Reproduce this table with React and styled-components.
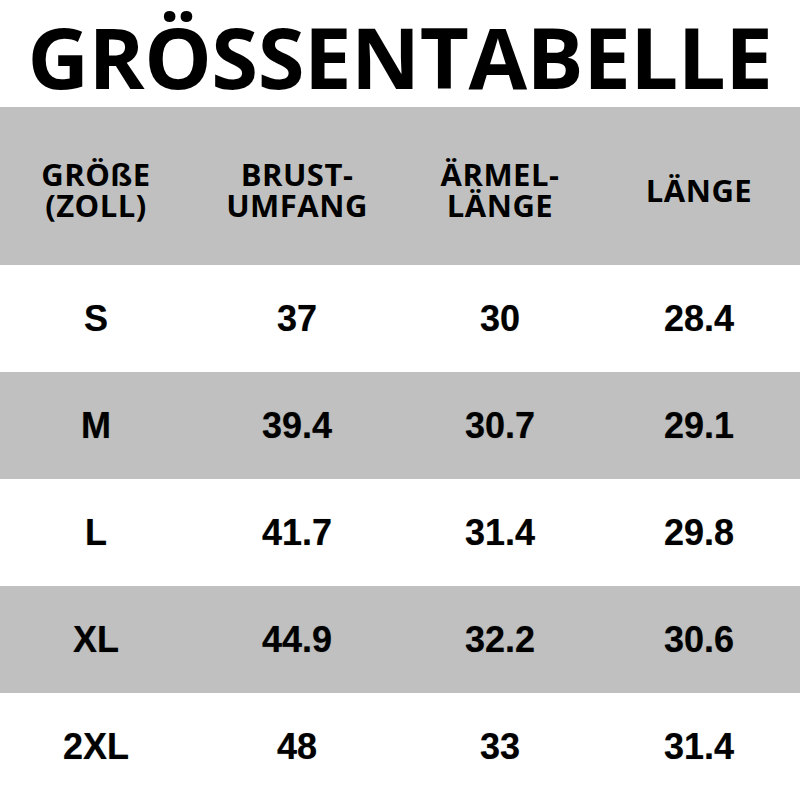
import React from 'react'
import styled, { createGlobalStyle } from 'styled-components'

const GlobalStyle = createGlobalStyle`
  html, body {
    margin: 0;
    padding: 0;
    background: #fff;
  }
  body {
    font-family: "Liberation Sans", Arial, sans-serif;
  }
`

const rows = [
  ['S', '37', '30', '28.4'],
  ['M', '39.4', '30.7', '29.1'],
  ['L', '41.7', '31.4', '29.8'],
  ['XL', '44.9', '32.2', '30.6'],
  ['2XL', '48', '33', '31.4'],
]

const headers = [
  ['GRÖßE', '(ZOLL)'],
  ['BRUST-', 'UMFANG'],
  ['ÄRMEL-', 'LÄNGE'],
  ['LÄNGE'],
]

const Page = styled.div`
  width: 800px;
  height: 800px;
  overflow: hidden;
  display: flex;
  flex-direction: column;
`

const Title = styled.h1`
  margin: 0;
  height: 107px;
  display: flex;
  align-items: center;
  justify-content: center;
  font-family: "Open Sans", sans-serif;
  font-weight: 700;
  font-size: 85px;
  line-height: 1;
  letter-spacing: -0.5px;
  color: #000;
  white-space: nowrap;
  padding-top: 6px;
  box-sizing: border-box;
`

const Row = styled.div`
  display: grid;
  grid-template-columns: 192px 210px 196px 202px;
  align-items: center;
  height: ${p => p.$height}px;
  background: ${p => (p.$shaded ? '#c0c0c0' : '#fff')};
`

const HeadCell = styled.div`
  text-align: center;
  font-family: "Open Sans", sans-serif;
  font-weight: 700;
  font-size: 31px;
  line-height: 31px;
  letter-spacing: 0.5px;
  color: #000;
  padding-top: 8px;
`

const Cell = styled.div`
  text-align: center;
  font-family: "Liberation Sans", Arial, sans-serif;
  font-weight: 700;
  font-size: 36px;
  color: #000;
  text-shadow: 0 0 1px rgba(0, 0, 0, 0.4);
`

export default function App() {
  return (
    <>
      <GlobalStyle />
      <Page>
        <Title>GRÖSSENTABELLE</Title>
        <Row $height={158} $shaded>
          {headers.map((lines, i) => (
            <HeadCell key={i}>
              {lines.map(l => <div key={l}>{l}</div>)}
            </HeadCell>
          ))}
        </Row>
        {rows.map((r, i) => (
          <Row key={r[0]} $height={107} $shaded={i % 2 === 1}>
            {r.map((v, j) => <Cell key={j}>{v}</Cell>)}
          </Row>
        ))}
      </Page>
    </>
  )
}
